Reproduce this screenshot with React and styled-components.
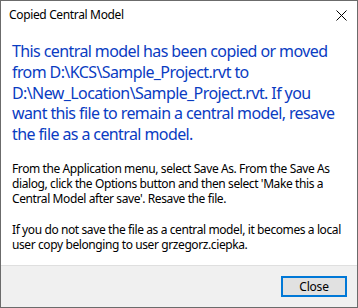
import React from 'react';
import styled, { createGlobalStyle } from 'styled-components';

const Global = createGlobalStyle`
  html, body {
    margin: 0;
    padding: 0;
    background: #ffffff;
  }
  * {
    box-sizing: border-box;
  }
`;

const Window = styled.div`
  width: 358px;
  height: 308px;
  border: 1px solid #6b6b6b;
  background: #ffffff;
  display: flex;
  flex-direction: column;
  font-family: 'Segoe UI', 'Noto Sans', sans-serif;
  color: #000000;
  overflow: hidden;
`;

const TitleBar = styled.div`
  height: 30px;
  display: flex;
  align-items: flex-start;
  justify-content: space-between;
  padding: 6px 10px 0 8px;
  flex-shrink: 0;
`;

const Title = styled.span`
  font-size: 12px;
  line-height: 16px;
  letter-spacing: -0.35px;
`;

const CloseGlyph = styled.button`
  border: 0;
  background: none;
  padding: 0;
  width: 11px;
  height: 11px;
  display: flex;
  margin-top: 3px;
  cursor: pointer;
`;

const Content = styled.div`
  flex: 1;
  min-height: 0;
  padding: 10px 11px 0 11px;
`;

const Instruction = styled.p`
  margin: 0;
  font-size: 16px;
  line-height: 20.8px;
  letter-spacing: -0.6px;
  color: #0a3cc2;
  white-space: nowrap;
`;

const Body = styled.p`
  margin: ${({ gap }) => gap}px 0 0 0;
  font-size: 12px;
  line-height: 15px;
  letter-spacing: -0.4px;
  white-space: nowrap;
`;

const Footer = styled.div`
  height: 42px;
  flex-shrink: 0;
  background: #f0f0f0;
  border-top: 1px solid #dfdfdf;
  display: flex;
  align-items: center;
  justify-content: flex-end;
  padding: 0 10px 0 0;
`;

const Button = styled.button`
  width: 66px;
  height: 21px;
  border: 2px solid #0078d7;
  background: #e1e1e1;
  font-family: inherit;
  font-size: 12px;
  line-height: 15px;
  letter-spacing: -0.2px;
  color: #000000;
  padding: 0;
  cursor: pointer;
`;

export default function App() {
  return (
    <>
      <Global />
      <Window>
        <TitleBar>
          <Title>Copied Central Model</Title>
          <CloseGlyph aria-label="Close">
            <svg width="11" height="11" viewBox="0 0 11 11">
              <path d="M0.5 0.5 L10.5 10.5 M10.5 0.5 L0.5 10.5" stroke="#000" strokeWidth="1" fill="none" />
            </svg>
          </CloseGlyph>
        </TitleBar>
        <Content>
          <Instruction>
            This central model has been copied or moved
            <br />
            from D:\KCS\Sample_Project.rvt to
            <br />
            D:\New_Location\Sample_Project.rvt. If you
            <br />
            want this file to remain a central model, resave
            <br />
            the file as a central model.
          </Instruction>
          <Body gap={16}>
            From the Application menu, select Save As. From the Save As
            <br />
            dialog, click the Options button and then select 'Make this a
            <br />
            Central Model after save'. Resave the file.
          </Body>
          <Body gap={16}>
            If you do not save the file as a central model, it becomes a local
            <br />
            user copy belonging to user grzegorz.ciepka.
          </Body>
        </Content>
        <Footer>
          <Button>Close</Button>
        </Footer>
      </Window>
    </>
  );
}
